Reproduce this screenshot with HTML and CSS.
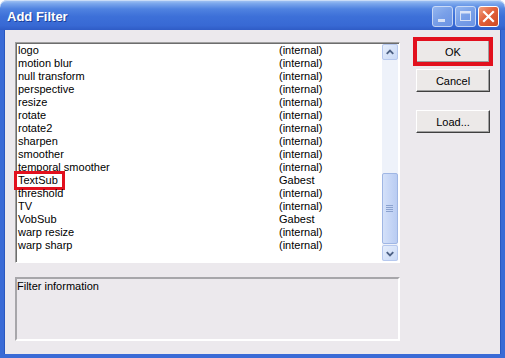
FILE: index.html
```html
<!DOCTYPE html>
<html>
<head>
<meta charset="utf-8">
<link rel="stylesheet" href="styles.css">
</head>
<body>
<div class="window">
  <div class="titlebar">
    <span class="title">Add Filter</span>
    <div class="tbtns">
      <div class="tbtn dim"><svg width="19" height="19" viewBox="0 0 19 19"><rect x="5" y="12" width="7" height="3" fill="#fff"/></svg></div>
      <div class="tbtn dim"><svg width="19" height="19" viewBox="0 0 19 19"><rect x="4.5" y="4.5" width="10" height="9" fill="none" stroke="#fff" stroke-width="1"/><rect x="4.5" y="4.5" width="10" height="2" fill="#fff"/></svg></div>
      <div class="tbtn close"><svg width="19" height="19" viewBox="0 0 19 19"><path d="M5 5 L14 14 M14 5 L5 14" stroke="#fff" stroke-width="2.2" stroke-linecap="square"/></svg></div>
    </div>
  </div>
  <div class="frame">
    <div class="leftcol">
      <div class="listbox">
        <div class="rows">
          <div class="row"><span>logo</span><span>(internal)</span></div>
          <div class="row"><span>motion blur</span><span>(internal)</span></div>
          <div class="row"><span>null transform</span><span>(internal)</span></div>
          <div class="row"><span>perspective</span><span>(internal)</span></div>
          <div class="row"><span>resize</span><span>(internal)</span></div>
          <div class="row"><span>rotate</span><span>(internal)</span></div>
          <div class="row"><span>rotate2</span><span>(internal)</span></div>
          <div class="row"><span>sharpen</span><span>(internal)</span></div>
          <div class="row"><span>smoother</span><span>(internal)</span></div>
          <div class="row"><span>temporal smoother</span><span>(internal)</span></div>
          <div class="row"><span class="mark">TextSub</span><span>Gabest</span></div>
          <div class="row"><span>threshold</span><span>(internal)</span></div>
          <div class="row"><span>TV</span><span>(internal)</span></div>
          <div class="row"><span>VobSub</span><span>Gabest</span></div>
          <div class="row"><span>warp resize</span><span>(internal)</span></div>
          <div class="row"><span>warp sharp</span><span>(internal)</span></div>
        </div>
        <div class="scrollbar">
          <div class="sbtn"><svg width="15" height="15" viewBox="0 0 15 15"><path d="M4 9 L7.5 5.5 L11 9" fill="none" stroke="#4d6185" stroke-width="2"/></svg></div>
          <div class="track">
            <div class="thumb"><svg width="8" height="8" viewBox="0 0 8 8"><path d="M0 0.5 H7 M0 2.5 H7 M0 4.5 H7 M0 6.5 H7" stroke="#8aa2cf" stroke-width="1"/></svg></div>
          </div>
          <div class="sbtn"><svg width="15" height="15" viewBox="0 0 15 15"><path d="M4 6 L7.5 9.5 L11 6" fill="none" stroke="#4d6185" stroke-width="2"/></svg></div>
        </div>
      </div>
      <div class="info">Filter information</div>
    </div>
    <div class="rightcol">
      <button class="btn ok">OK</button>
      <button class="btn">Cancel</button>
      <button class="btn load">Load...</button>
    </div>
  </div>
</div>
</body>
</html>
```
FILE: styles.css
```css
html, body {
  margin: 0;
  padding: 0;
  background: #ffffff;
}
body {
  width: 505px;
  height: 358px;
  overflow: hidden;
  font-family: "Liberation Sans", Arial, sans-serif;
  font-size: 11px;
}
.window {
  width: 505px;
  height: 358px;
  display: flex;
  flex-direction: column;
}
.titlebar {
  height: 30px;
  flex: none;
  display: flex;
  align-items: center;
  justify-content: space-between;
  border-radius: 7px 7px 0 0;
  background: linear-gradient(to bottom, #a8c8f4 0%, #7aa6ec 12%, #4f82e0 30%, #3d70d8 55%, #3869d4 85%, #2f5cc6 100%);
  box-shadow: inset 0 1px 0 #c9dcf7;
}
.title {
  margin-left: 7px;
  margin-top: 2px;
  color: #fff;
  font-weight: bold;
  font-size: 13px;
  text-shadow: 1px 1px 0 #1a3f9a;
}
.tbtns {
  display: flex;
  gap: 2px;
  margin-right: 6px;
  margin-top: 3px;
}
.tbtn {
  width: 19px;
  height: 19px;
  border: 1px solid #fff;
  border-radius: 3px;
  display: flex;
}
.tbtn.dim {
  background: linear-gradient(135deg, #a4c2f3 0%, #86aaec 50%, #7a9fe8 100%);
  border-color: #e6eefc;
  opacity: 0.8;
}
.tbtn.close {
  background: linear-gradient(135deg, #f0a080 0%, #e2603a 45%, #cf4a22 100%);
}
.frame {
  flex: 1;
  display: flex;
  align-items: flex-start;
  background: #ece9ed;
  border-left: 4px solid #3a6bd6;
  border-right: 4px solid #3a6bd6;
  border-bottom: 4px solid #3a6bd6;
  box-shadow: inset 1px 0 0 #2a58c0, inset -1px 0 0 #2a58c0;
  padding: 12px 11px 0 11px;
}
.leftcol {
  width: 385px;
  display: flex;
  flex-direction: column;
  gap: 14px;
}
.listbox {
  height: 221px;
  box-sizing: border-box;
  background: #fff;
  border-top: 1px solid #a0a0a0;
  border-left: 1px solid #a0a0a0;
  border-right: 1px solid #fff;
  border-bottom: 1px solid #fff;
  box-shadow: inset 1px 1px 0 #6d6d6d;
  display: flex;
  padding: 1px;
}
.rows {
  flex: 1;
  padding: 0 0 0 1px;
}
.row {
  display: grid;
  grid-template-columns: 261px auto;
  height: 13px;
  line-height: 13px;
  color: #000;
}
.mark {
  justify-self: start;
  outline: 3px solid #e2101e;
  outline-offset: 0;
  padding-right: 4px;
  padding-left: 1px;
  margin-left: -1px;
}
.scrollbar {
  width: 16px;
  display: flex;
  flex-direction: column;
  background: #eef2fa;
}
.sbtn {
  height: 16px;
  box-sizing: border-box;
  border: 1px solid #b6c8ee;
  border-radius: 2px;
  background: linear-gradient(135deg, #e6eefc 0%, #c9d9f6 100%);
  display: flex;
  align-items: center;
  justify-content: center;
  flex: none;
}
.track {
  flex: 1;
  display: flex;
  flex-direction: column;
  justify-content: flex-end;
}
.thumb {
  height: 71px;
  box-sizing: border-box;
  border: 1px solid #9fb6e4;
  border-radius: 2px;
  background: linear-gradient(to right, #d4e1f9 0%, #c6d6f6 50%, #b9ccf2 100%);
  display: flex;
  align-items: center;
  justify-content: center;
  margin-bottom: 1px;
}
.info {
  height: 64px;
  box-sizing: border-box;
  border-top: 2px solid #a7a6aa;
  border-left: 2px solid #a7a6aa;
  border-right: 2px solid #fff;
  border-bottom: 2px solid #fff;
  padding: 1px 0 0 0;
  line-height: 13px;
  color: #000;
}
.rightcol {
  margin-left: 16px;
  margin-top: -2px;
  display: flex;
  flex-direction: column;
  gap: 6px;
}
.btn {
  width: 74px;
  height: 23px;
  margin: 0;
  padding: 0;
  font-family: "Liberation Sans", Arial, sans-serif;
  font-size: 11px;
  color: #000;
  background: #ece9e8;
  border-top: 1px solid #fff;
  border-left: 1px solid #fff;
  border-right: 1px solid #404040;
  border-bottom: 1px solid #404040;
  box-shadow: inset -1px -1px 0 #a0a0a0;
}
.btn.ok {
  outline: 4px solid #e2101e;
  outline-offset: -1px;
}
.btn.load {
  margin-top: 12px;
}
```
